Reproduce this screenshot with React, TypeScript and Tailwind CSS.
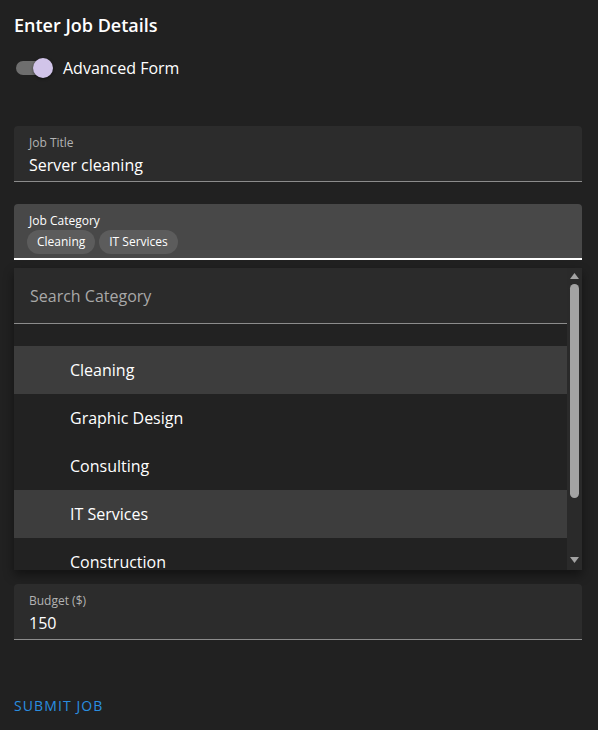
const categories = [
  { name: 'Cleaning', selected: true },
  { name: 'Graphic Design', selected: false },
  { name: 'Consulting', selected: false },
  { name: 'IT Services', selected: true },
  { name: 'Construction', selected: false },
];

function FilledField({ label, value }: { label: string; value: string }) {
  return (
    <div className="h-[56px] rounded-t-[4px] bg-[#2c2c2c] border-b border-[#8c8c8c] px-[15px] pt-[9px]">
      <div className="text-[12px] leading-[16px] text-[#b3b3b3]">{label}</div>
      <div className="mt-[2px] text-[16px] leading-[24px] text-white">{value}</div>
    </div>
  );
}

export default function App() {
  return (
    <div
      className="min-h-[730px] w-[598px] bg-[#212121] pl-[14px] pr-[16px] text-white"
      style={{ fontFamily: '"Open Sans", "Noto Sans", sans-serif' }}
    >
      <h1 className="h-[50px] pt-[12px] text-[18px] leading-[26px] font-semibold">Enter Job Details</h1>

      {/* toggle */}
      <div className="flex h-[36px] items-center gap-[13px]">
        <div className="relative ml-[2px] h-[14px] w-[34px] rounded-full bg-[#6e6e6e]">
          <div className="absolute -top-[3px] right-[-3px] h-[20px] w-[20px] rounded-full bg-[#d1c4e9] shadow-[0_1px_3px_rgba(0,0,0,0.5)]" />
        </div>
        <span className="text-[16px] leading-[24px]">Advanced Form</span>
      </div>

      <div className="mt-[40px]">
        <FilledField label="Job Title" value="Server cleaning" />
      </div>

      {/* job category */}
      <div className="mt-[22px] h-[56px] rounded-t-[4px] bg-[#484848] border-b-2 border-white px-[13px] pt-[9px]">
        <div className="pl-[2px] text-[12px] leading-[16px] text-white">Job Category</div>
        <div className="mt-[1px] flex gap-[4px]">
          <span className="h-[24px] rounded-full bg-[#5c5c5c] px-[10px] text-[12px] leading-[24px]">Cleaning</span>
          <span className="h-[24px] rounded-full bg-[#5c5c5c] px-[10px] text-[12px] leading-[24px]">IT Services</span>
        </div>
      </div>

      {/* popup */}
      <div className="mt-[8px] flex h-[302px] overflow-hidden bg-[#222222] shadow-[0_5px_10px_rgba(0,0,0,0.45)]">
        <div className="flex-1 overflow-hidden">
          <div className="flex h-[56px] items-center border-b border-[#8c8c8c] bg-[#2b2b2b] px-[16px]">
            <span className="text-[16px] text-[#a8a8a8]">Search Category</span>
          </div>
          <div className="h-[22px]" />
          {categories.map((c) => (
            <div
              key={c.name}
              className={`flex h-[48px] shrink-0 items-center pl-[56px] text-[16px] ${c.selected ? 'bg-[#3d3d3d]' : ''}`}
            >
              {c.name}
            </div>
          ))}
        </div>
        <div className="flex w-[15px] flex-col items-center bg-[#2a2a2a] py-[4px]">
          <svg width="9" height="6" viewBox="0 0 9 6" className="mt-[1px]">
            <path d="M4.5 0 L9 6 L0 6 Z" fill="#a3a3a3" />
          </svg>
          <div className="mt-[5px] h-[214px] w-[9px] rounded-full bg-[#a3a3a3]" />
          <div className="flex-1" />
          <svg width="9" height="6" viewBox="0 0 9 6" className="mb-[3px]">
            <path d="M0 0 L9 0 L4.5 6 Z" fill="#a3a3a3" />
          </svg>
        </div>
      </div>

      <div className="mt-[14px]">
        <FilledField label="Budget ($)" value="150" />
      </div>

      <button className="mt-[56px] text-[14px] leading-[20px] tracking-[1.1px] text-[#2a8fe0]">SUBMIT JOB</button>
    </div>
  );
}
